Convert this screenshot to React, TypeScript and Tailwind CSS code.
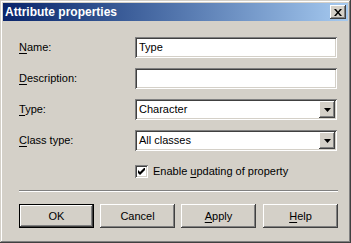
const raised =
  "shadow-[inset_-1px_-1px_#404040,inset_1px_1px_#ffffff,inset_-2px_-2px_#808080,inset_2px_2px_#d4d0c8]";
const sunken =
  "shadow-[inset_1px_1px_#808080,inset_-1px_-1px_#ffffff,inset_2px_2px_#404040,inset_-2px_-2px_#d4d0c8]";

const font = { fontFamily: '"Liberation Sans", Arial, sans-serif' };

function Label({ mn, rest }: { mn: string; rest: string }) {
  return (
    <span className="text-[11px] leading-[13px] text-black">
      <span className="underline underline-offset-[2px]">{mn}</span>
      {rest}
    </span>
  );
}

function TextBox({ value }: { value?: string }) {
  return (
    <div className={`w-[202px] h-[21px] bg-white ${sunken} flex items-center pl-[4px] text-[11px] leading-[13px]`}>
      {value}
    </div>
  );
}

function Combo({ value }: { value: string }) {
  return (
    <div className={`w-[202px] h-[21px] bg-white ${sunken} flex items-center p-[2px] text-[11px] leading-[13px]`}>
      <span className="flex-1 pl-[2px]">{value}</span>
      <div className={`w-[16px] h-[17px] bg-[#d4d0c8] ${raised} flex items-center justify-center`}>
        <svg width="7" height="4" viewBox="0 0 7 4">
          <path d="M0 0h7L3.5 4z" fill="#000" />
        </svg>
      </div>
    </div>
  );
}

function Button({ children, isDefault }: { children: React.ReactNode; isDefault?: boolean }) {
  if (isDefault) {
    return (
      <div className="w-[75px] h-[24px] border border-black">
        <div className={`w-full h-full bg-[#d4d0c8] ${raised} flex items-center justify-center text-[11px] leading-[13px]`}>
          {children}
        </div>
      </div>
    );
  }
  return (
    <div className={`w-[75px] h-[24px] bg-[#d4d0c8] ${raised} flex items-center justify-center text-[11px] leading-[13px]`}>
      {children}
    </div>
  );
}

export default function App() {
  return (
    <div
      style={font}
      className="w-[351px] h-[243px] overflow-hidden bg-[#d4d0c8] p-[3px] flex flex-col shadow-[inset_-1px_-1px_#404040,inset_1px_1px_#d4d0c8,inset_-2px_-2px_#808080,inset_2px_2px_#ffffff]"
    >
      <div className="h-[18px] shrink-0 flex items-center justify-between bg-gradient-to-r from-[#0a246a] to-[#a6caf0] pl-[2px] pr-[2px]">
        <span className="text-white font-bold text-[12px] leading-[14px]">Attribute properties</span>
        <div className={`w-[16px] h-[14px] bg-[#d4d0c8] ${raised} flex items-center justify-center`}>
          <svg width="8" height="7" viewBox="0 0 8 7">
            <path d="M0 0h2l2 2.5L6 0h2L5 3.5 8 7H6L4 4.5 2 7H0l3-3.5z" fill="#000" />
          </svg>
        </div>
      </div>

      <div className="flex flex-col pl-[16px] pr-[10px] pt-[16px]">
        <div className="grid grid-cols-[116px_202px] auto-rows-[21px] gap-y-[10px] items-center">
          <Label mn="N" rest="ame:" />
          <TextBox value="Type" />
          <Label mn="D" rest="escription:" />
          <TextBox />
          <Label mn="T" rest="ype:" />
          <Combo value="Character" />
          <Label mn="C" rest="lass type:" />
          <Combo value="All classes" />
        </div>

        <div className="flex items-center h-[13px] mt-[14px] pl-[116px]">
          <div className={`w-[13px] h-[13px] bg-white ${sunken} flex items-center justify-center`}>
            <svg width="7" height="7" viewBox="0 0 7 7">
              <path d="M0 2v3l2 2 5-5V-1L2 4z" fill="#000" />
            </svg>
          </div>
          <span className="ml-[5px] text-[11px] leading-[13px]">
            Enable <span className="underline underline-offset-[2px]">u</span>pdating of property
          </span>
        </div>

        <div className="mt-[12px] w-[319px] h-[2px] border-t border-[#808080] border-b border-b-white" />

        <div className="flex mt-[12px] gap-[6px]">
          <Button isDefault>OK</Button>
          <Button>Cancel</Button>
          <Button>
            <span><span className="underline underline-offset-[2px]">A</span>pply</span>
          </Button>
          <div className="ml-[1px]">
            <Button>
              <span><span className="underline underline-offset-[2px]">H</span>elp</span>
            </Button>
          </div>
        </div>
      </div>
    </div>
  );
}
